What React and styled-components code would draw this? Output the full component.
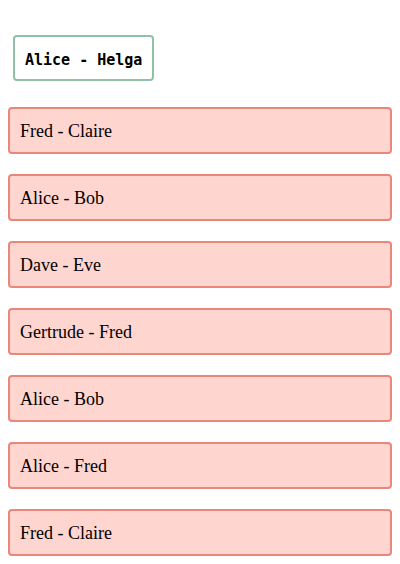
import React from 'react'
import styled, { createGlobalStyle } from "styled-components";

const GlobalStyle = createGlobalStyle`
  body {
    margin: 8px;
    background: #fff;
    font-family: "Liberation Serif", serif;
  }
`;

const Page = styled.div`
  display: flex;
  flex-direction: column;
  gap: 20px;
`;

const Header = styled.div`
  padding: 27px 5px 6px;
  display: flex;
`;

const Selected = styled.div`
  border: 2px solid #8fc1a9;
  border-radius: 4px;
  padding: 13px 10px 9px;
  font-family: "DejaVu Sans Mono", monospace;
  font-weight: bold;
  font-size: 15px;
  line-height: 20px;
  color: #000;
`;

const Pair = styled.div`
  border: 2px solid #e8877a;
  border-radius: 4px;
  background: #ffd5cf;
  padding: 12px 10px 10px;
  font-size: 18px;
  line-height: 21px;
  color: #000;
`;

const pairs = [
  'Fred - Claire',
  'Alice - Bob',
  'Dave - Eve',
  'Gertrude - Fred',
  'Alice - Bob',
  'Alice - Fred',
  'Fred - Claire',
];

function App() {
  return (
    <>
      <GlobalStyle />
      <Page>
        <Header>
          <Selected>Alice - Helga</Selected>
        </Header>
        {pairs.map((p, i) => <Pair key={i}>{p}</Pair>)}
      </Page>
    </>
  )
}

export default App
